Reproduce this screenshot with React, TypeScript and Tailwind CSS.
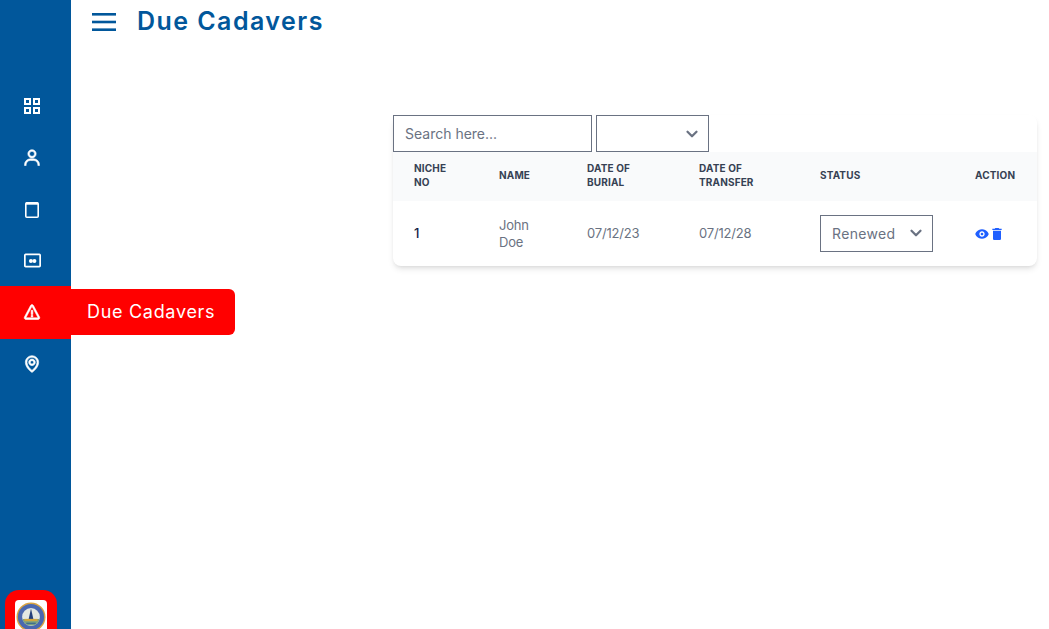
import { BiUser, BiError, BiMap, BiSolidShow } from 'react-icons/bi'
import { MdDelete } from 'react-icons/md'
import { ChevronDown } from 'lucide-react'

function GridIcon({ className }: { className?: string }) {
  return (
    <svg viewBox="0 0 16 16" className={className} fill="none" stroke="currentColor" strokeWidth="2">
      <rect x="1" y="1" width="5" height="5" />
      <rect x="10" y="1" width="5" height="5" />
      <rect x="1" y="10" width="5" height="5" />
      <rect x="10" y="10" width="5" height="5" />
    </svg>
  )
}

function CalendarIcon({ className }: { className?: string }) {
  return (
    <svg viewBox="0 0 16 16" className={className} fill="none" stroke="currentColor" strokeWidth="1.6">
      <rect x="1.8" y="0.8" width="12.4" height="14.4" rx="1" />
      <path d="M2 1.5h12" strokeWidth="2.4" />
    </svg>
  )
}

function CardIcon({ className }: { className?: string }) {
  return (
    <svg viewBox="0 0 16 16" className={className} fill="none" stroke="currentColor" strokeWidth="1.6">
      <rect x="0.8" y="2.3" width="14.4" height="11.4" rx="0.75" />
      <circle cx="6.5" cy="8.5" r="1.9" fill="currentColor" stroke="none" />
      <circle cx="9.8" cy="8.5" r="1.9" fill="currentColor" stroke="none" />
    </svg>
  )
}

const navItems = [
  { name: 'Dashboard', icon: GridIcon, rowClass: 'h-[52px]', iconClass: 'h-[16px] w-[16px]' },
  { name: 'Users', icon: BiUser, rowClass: 'h-[52px]', iconClass: 'h-[20px] w-[20px] stroke-current stroke-[0.7]' },
  { name: 'Calendar', icon: CalendarIcon, rowClass: 'h-[52px]', iconClass: 'h-[16px] w-[16px]' },
  { name: 'Payments', icon: CardIcon, rowClass: 'h-[50px] pb-[2px]', iconClass: 'h-[17px] w-[17px]' },
  { name: 'Due Cadavers', icon: BiError, rowClass: 'h-[53px] pb-[1px]', iconClass: 'h-[20px] w-[20px] stroke-current stroke-[0.7]', active: true },
  { name: 'Map', icon: BiMap, rowClass: 'h-[52px] pb-[2px]', iconClass: 'h-[20px] w-[20px] stroke-current stroke-[0.7]' },
]

function Logo() {
  return (
    <svg viewBox="0 0 32 32" className="h-[30px] w-[30px]">
      <circle cx="16" cy="16" r="15.5" fill="#d9a441" />
      <circle cx="16" cy="16" r="14" fill="#4a68b0" />
      <circle cx="16" cy="16" r="9.5" fill="#e3e8e2" />
      <path d="M6.8 18h18.4a9.5 9.5 0 0 1-18.4 0z" fill="#7fa37e" />
      <path d="M16 7l2.5 11h-5z" fill="#24407a" />
      <path d="M9 18h14v2.4H9z" fill="#d0a63e" />
      <path d="M11 22h10v1.6H11z" fill="#3f6f8f" />
    </svg>
  )
}

export default function App() {
  return (
    <div className="flex h-screen overflow-hidden bg-white font-['Inter',sans-serif]">
      {/* Sidebar */}
      <aside className="relative flex w-[71px] flex-shrink-0 flex-col bg-[#01579b]">
        <nav className="mt-[80px] flex flex-col">
          {navItems.map((item) => {
            const Icon = item.icon
            return (
              <div
                key={item.name}
                className={`relative flex items-center justify-center pr-[7px] text-white ${item.rowClass} ${item.active ? 'bg-[#ff0000]' : ''}`}
              >
                <Icon className={item.iconClass} />
                {item.active && (
                  <span className="absolute left-[71px] top-[3px] flex h-[46px] w-[164px] items-center rounded-r-md bg-[#ff0000] pb-[2px] pl-4 text-[18px] tracking-[0.7px]">
                    {item.name}
                  </span>
                )}
              </div>
            )
          })}
        </nav>
        <div className="mt-auto -mb-[15px] ml-[5px] flex h-[54px] w-[52px] flex-shrink-0 items-start justify-center rounded-[14px] bg-[#ff0000] pt-[10px]">
          <div className="flex h-[34px] w-[32px] items-center justify-center rounded-sm bg-white">
            <Logo />
          </div>
        </div>
      </aside>

      {/* Main */}
      <main className="flex min-w-0 flex-1 flex-col">
        <header className="flex h-[43px] items-center gap-[21px] pl-[21px]">
          <svg viewBox="0 0 24 18" className="h-[18px] w-[24px] text-[#01579b]" fill="currentColor">
            <rect x="0" y="0" width="24" height="2.6" />
            <rect x="0" y="7.7" width="24" height="2.6" />
            <rect x="0" y="15.4" width="24" height="2.6" />
          </svg>
          <h1 className="text-[25px] font-semibold tracking-[1.45px] text-[#01579b]">Due Cadavers</h1>
        </header>

        <div className="ml-[322px] mt-[72px] w-[644px] rounded-lg bg-white shadow-md">
          <div className="flex gap-[4px]">
            <input
              placeholder="Search here..."
              className="h-[37px] w-[199px] border border-gray-500 px-[11px] pb-[1px] text-[14px] text-gray-500 placeholder:text-gray-500"
            />
            <div className="flex h-[37px] w-[113px] items-center justify-end border border-gray-500 pr-[7px] text-gray-500">
              <ChevronDown className="h-[18px] w-[18px]" strokeWidth={3} />
            </div>
          </div>

          <table className="w-full table-fixed border-collapse text-left">
            <colgroup>
              <col className="w-[85px]" />
              <col className="w-[88px]" />
              <col className="w-[112px]" />
              <col className="w-[121px]" />
              <col className="w-[155px]" />
              <col className="w-[83px]" />
            </colgroup>
            <thead className="bg-gray-50 text-[10px] uppercase leading-[14px] tracking-[0.15px] text-gray-700">
              <tr className="h-[49px]">
                <th className="pb-[3px] pl-[21px] font-bold">Niche<br />No</th>
                <th className="pb-[3px] pl-[21px] font-bold">Name</th>
                <th className="pb-[3px] pl-[21px] font-bold">Date of<br />Burial</th>
                <th className="pb-[3px] pl-[21px] font-bold">Date of<br />Transfer</th>
                <th className="pb-[3px] pl-[21px] font-bold">Status</th>
                <th className="pb-[3px] pl-[21px] font-bold">Action</th>
              </tr>
            </thead>
            <tbody className="text-[13px] tracking-[-0.2px] text-gray-500">
              <tr className="h-[65px]">
                <td className="pl-[21px] font-medium text-[#111c44]">1</td>
                <td className="pl-[21px] leading-[17px]">John<br />Doe</td>
                <td className="pl-[21px]">07/12/23</td>
                <td className="pl-[21px]">07/12/28</td>
                <td className="pl-[21px]">
                  <div className="flex h-[37px] w-[113px] items-center justify-between border border-gray-500 pb-[1px] pl-[11px] pr-[7px] text-[14px] tracking-[0.35px]">
                    Renewed
                    <ChevronDown className="h-[18px] w-[18px]" strokeWidth={3} />
                  </div>
                </td>
                <td className="pl-[21px]">
                  <div className="flex items-center text-[#1f5fff]">
                    <BiSolidShow className="h-[16px] w-[16px] -ml-[1px]" />
                    <MdDelete className="h-[16px] w-[16px] -ml-[1px]" />
                  </div>
                </td>
              </tr>
            </tbody>
          </table>
        </div>
      </main>
    </div>
  )
}
